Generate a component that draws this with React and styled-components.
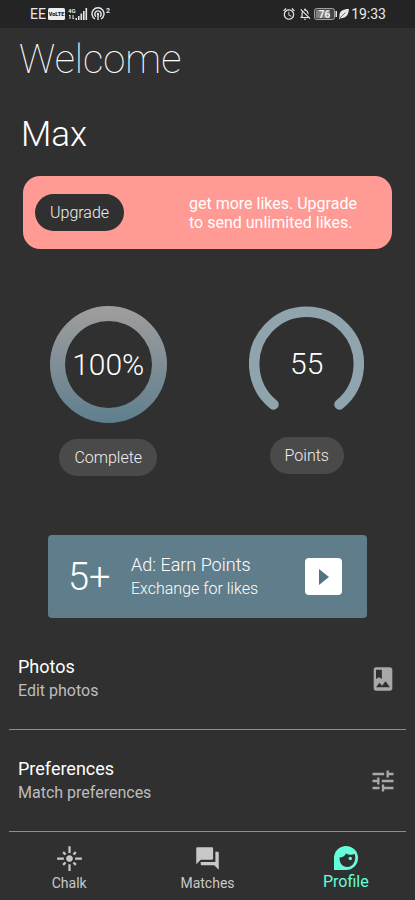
import React from 'react';
import styled, { createGlobalStyle } from 'styled-components';
import {
  MdAlarm,
  MdFlare,
  MdOutlineNotificationsOff,
  MdQuestionAnswer,
  MdTune
} from 'react-icons/md';

const GlobalStyle = createGlobalStyle`
  * {
    box-sizing: border-box;
  }

  body {
    margin: 0;
    background: #303030;
    font-family: Roboto, sans-serif;
    color: #fff;
  }

  button {
    font-family: inherit;
    border: none;
    cursor: pointer;
  }
`;

const Screen = styled.div`
  min-height: 100vh;
  display: flex;
  flex-direction: column;
  background: #303030;
`;

const StatusBar = styled.header`
  height: 28px;
  padding: 0 29px 0 30px;
  display: flex;
  align-items: center;
  justify-content: space-between;
  background: #242424;
  color: #e8e8e8;
  font-size: 14px;
`;

const StatusGroup = styled.div`
  display: flex;
  align-items: center;
  gap: 2px;

  svg {
    display: block;
  }
`;

const Main = styled.main`
  display: flex;
  flex-direction: column;
`;

const Heading = styled.h1`
  margin: 8px 20px 0 19px;
  font-size: 40px;
  line-height: 48px;
  font-weight: 100;
`;

const UserName = styled.h2`
  margin: 30px 21px 0;
  font-size: 35px;
  line-height: 42px;
  font-weight: 300;
`;

const Banner = styled.section`
  margin: 20px 23px 0;
  min-height: 73px;
  padding: 0 28px 0 12px;
  display: flex;
  align-items: center;
  justify-content: space-between;
  border-radius: 17px;
  background: #ff9a94;
`;

const UpgradeButton = styled.button`
  height: 37px;
  padding: 0 15px;
  border-radius: 19px;
  background: #303030;
  color: #f0f0f0;
  font-size: 16px;
  font-weight: 300;
`;

const BannerText = styled.p`
  margin: 0;
  width: 175px;
  font-size: 16px;
  line-height: 19px;
`;

const Stats = styled.section`
  margin-top: 57px;
  padding: 0 9px;
  display: grid;
  grid-template-columns: 1fr 1fr;
  align-items: start;
`;

const Stat = styled.div`
  display: flex;
  flex-direction: column;
  align-items: center;
  gap: 16px;
`;

const Gauge = styled.div`
  display: grid;
  place-items: center;

  > * {
    grid-area: 1 / 1;
  }

  svg {
    display: block;
  }
`;

const GaugeValue = styled.span`
  font-size: 30px;
  line-height: 36px;
  font-weight: 300;
`;

const StatButton = styled.button`
  height: 37px;
  padding: 0 15px;
  border-radius: 19px;
  background: #4a4a4a;
  color: #f0f0f0;
  font-size: 16px;
  font-weight: 300;
`;

const AdCard = styled.section`
  margin: 59px 48px 0;
  min-height: 83px;
  padding: 0 25px 0 20px;
  display: flex;
  align-items: center;
  border-radius: 4px;
  background: #607d8b;
`;

const AdAmount = styled.span`
  width: 63px;
  font-size: 38px;
  font-weight: 300;
`;

const AdText = styled.div`
  flex: 1;
  font-weight: 300;
`;

const AdTitle = styled.div`
  font-size: 18px;
  line-height: 24px;
`;

const AdCaption = styled.div`
  font-size: 16px;
  line-height: 24px;
`;

const PlayButton = styled.button`
  width: 37px;
  height: 37px;
  padding: 0;
  display: grid;
  place-items: center;
  border-radius: 4px;
  background: #fff;
`;

const Menu = styled.div`
  margin: 10px 9px 0;
`;

const MenuRow = styled.button`
  width: 100%;
  height: 102px;
  padding: 1px 9px 0;
  display: flex;
  align-items: center;
  justify-content: space-between;
  border-bottom: 1px solid #8f8f8f;
  background: none;
  color: #a8a8a8;
  text-align: left;
`;

const RowTitle = styled.div`
  color: #fff;
  font-size: 18px;
  line-height: 24px;
`;

const RowCaption = styled.div`
  color: #bdbdbd;
  font-size: 16px;
  line-height: 24px;
`;

const Nav = styled.nav`
  margin-top: auto;
  height: 68px;
  display: grid;
  grid-template-columns: repeat(3, 1fr);
`;

const NavLink = styled.a`
  padding-top: 13px;
  display: flex;
  flex-direction: column;
  align-items: center;
  color: ${props => (props.$active ? '#64ffda' : '#c8c8c8')};
  font-size: ${props => (props.$active ? '16px' : '14px')};
  line-height: 22px;
  text-decoration: none;

  svg {
    display: block;
  }
`;

function VolteBadge() {
  return (
    <svg width="17" height="12" viewBox="0 0 17 12">
      <rect width="17" height="12" rx="1.5" fill="#eee" />
      <text x="8.5" y="8" textAnchor="middle" fontSize="5.5" fontWeight="900" fill="#242424">VoLTE</text>
    </svg>
  );
}

function SignalIcon() {
  return (
    <svg width="22" height="14" viewBox="0 0 22 14" fill="#e8e8e8">
      <text x="1" y="6" fontSize="6" fontWeight="700">4G</text>
      <path d="M3 8v4M2 9l1-1M6 8v4M6 12l1-1" stroke="#e8e8e8" />
      <rect x="8.5" y="11" width="1.5" height="2" />
      <rect x="11" y="9" width="1.5" height="4" />
      <rect x="13.500" y="6.500" width="1.600" height="6.500" />
      <rect x="16" y="4" width="1.600" height="9" />
      <rect x="18.500" y="1" width="1.600" height="12" />
    </svg>
  );
}

function HotspotIcon() {
  return (
    <svg width="20" height="14" viewBox="0 0 20 14" fill="none" stroke="#e8e8e8" strokeWidth="1.4">
      <path d="M4 12a6 6 0 1 1 6 0" />
      <path d="M5 9.6a3.2 3.2 0 1 1 4 0" />
      <circle cx="7" cy="7" r="1.2" fill="#e8e8e8" stroke="none" />
      <path d="M7 8v5" />
      <text x="15" y="6" fontSize="7" fontWeight="700" fill="#e8e8e8" stroke="none">2</text>
    </svg>
  );
}

function BatteryIcon() {
  return (
    <svg width="23" height="12" viewBox="0 0 23 12">
      <rect x="0.5" y="0.5" width="20" height="11" rx="2" fill="#444" stroke="#a0a0a0" />
      <rect x="2" y="2" width="14" height="8" fill="#808080" />
      <rect x="21.5" y="3" width="1.5" height="6" fill="#e8e8e8" />
      <text x="10.5" y="9.5" textAnchor="middle" fontSize="10" fontWeight="700" fill="#eee">76</text>
    </svg>
  );
}

function LeafIcon() {
  return (
    <svg width="10" height="12" viewBox="0 0 10 12">
      <path d="M10 1C4 1 0 3 .5 8.5L0 11.5l1.4-1.3C7 10.5 9.5 7 10 1Z" fill="#e8e8e8" />
      <path d="M1 10 6.5 4.5" stroke="#242424" strokeWidth="0.6" />
    </svg>
  );
}

function AlbumIcon() {
  return (
    <svg width="28" height="28" viewBox="0 0 24 24" fill="currentColor">
      <path d="M18 2H6c-1.1 0-2 .9-2 2v16c0 1.100.9 2 2 2h12c1.100 0 2-.9 2-2V4c0-1.100-.9-2-2-2zM6 4h5v8l-2.500-1.500L6 12V4zm0 15l3-3.860 2.140 2.580 3-3.860L18 19H6z" />
    </svg>
  );
}

function ProfileIcon() {
  return (
    <svg width="24" height="26" viewBox="0 -1 24 26">
      <path d="M0 24V12a12 12 0 1 1 12 12Z" fill="#64ffda" />
      <path
        d="M5.5 11.5c3.500 0 5.700-1.700 6.500-4.200 2.200 1.700 5.200 2 8.800.7 1.900 6.700-1.800 13-7.800 13-4.500 0-7.500-3.500-7.500-9.500Z"
        fill="#303030"
      />
      <circle cx="16.3" cy="12.5" r="1.700" fill="#64ffda" />
    </svg>
  );
}

function CompleteRing() {
  return (
    <svg width="117" height="117" viewBox="0 0 117 117">
      <defs>
        <linearGradient id="complete-ring" x1="0" y1="0" x2="0" y2="1">
          <stop offset="0" stopColor="#a09e9e" />
          <stop offset="1" stopColor="#5f7f8e" />
        </linearGradient>
      </defs>
      {/* filled ring, so that the gradient spans the outer edge */}
      <path
        fillRule="evenodd"
        fill="url(#complete-ring)"
        d="M58.5 0a58.5 58.5 0 1 1 0 117a58.5 58.5 0 1 1 0-117ZM58.5 15a43.5 43.5 0 1 0 0 87a43.5 43.5 0 1 0 0-87Z"
      />
    </svg>
  );
}

function PointsArc() {
  return (
    <svg width="115" height="115" viewBox="0 0 115 115">
      <path
        d="M24.5 98.5A52.3 52.3 0 1 1 90.5 98.5"
        fill="none"
        stroke="#90a4ae"
        strokeWidth="10.5"
        strokeLinecap="round"
      />
    </svg>
  );
}

const menuItems = [
  { title: 'Photos', caption: 'Edit photos', icon: <AlbumIcon /> },
  { title: 'Preferences', caption: 'Match preferences', icon: <MdTune size={28} /> }
];

const navItems = [
  { label: 'Chalk', icon: <MdFlare size={27} /> },
  { label: 'Matches', icon: <MdQuestionAnswer size={27} /> },
  { label: 'Profile', icon: <ProfileIcon />, active: true }
];

export default function App() {
  return (
    <Screen>
      <GlobalStyle />
      <StatusBar>
        <StatusGroup>
          <span>EE</span>
          <VolteBadge />
          <SignalIcon />
          <HotspotIcon />
        </StatusGroup>
        <StatusGroup>
          <MdAlarm size={14} />
          <MdOutlineNotificationsOff size={14} />
          <BatteryIcon />
          <LeafIcon />
          <span>19:33</span>
        </StatusGroup>
      </StatusBar>

      <Main>
        <Heading>Welcome</Heading>
        <UserName>Max</UserName>

        <Banner>
          <UpgradeButton type="button">Upgrade</UpgradeButton>
          <BannerText>get more likes. Upgrade to send unlimited likes.</BannerText>
        </Banner>

        <Stats>
          <Stat>
            <Gauge>
              <CompleteRing />
              <GaugeValue>100%</GaugeValue>
            </Gauge>
            <StatButton type="button">Complete</StatButton>
          </Stat>
          <Stat>
            <Gauge>
              <PointsArc />
              <GaugeValue>55</GaugeValue>
            </Gauge>
            <StatButton type="button">Points</StatButton>
          </Stat>
        </Stats>

        <AdCard>
          <AdAmount>5+</AdAmount>
          <AdText>
            <AdTitle>Ad: Earn Points</AdTitle>
            <AdCaption>Exchange for likes</AdCaption>
          </AdText>
          <PlayButton type="button" aria-label="Play ad">
            <svg width="10" height="16" viewBox="0 0 10 16">
              <path d="M0 0v16l10-8Z" fill="#527482" />
            </svg>
          </PlayButton>
        </AdCard>

        <Menu>
          {menuItems.map(item => (
            <MenuRow key={item.title} type="button">
              <div>
                <RowTitle>{item.title}</RowTitle>
                <RowCaption>{item.caption}</RowCaption>
              </div>
              {item.icon}
            </MenuRow>
          ))}
        </Menu>
      </Main>

      <Nav>
        {navItems.map(item => (
          <NavLink
            key={item.label}
            href="#"
            $active={item.active}
            aria-current={item.active ? 'page' : undefined}
          >
            {item.icon}
            <span>{item.label}</span>
          </NavLink>
        ))}
      </Nav>
    </Screen>
  );
}
